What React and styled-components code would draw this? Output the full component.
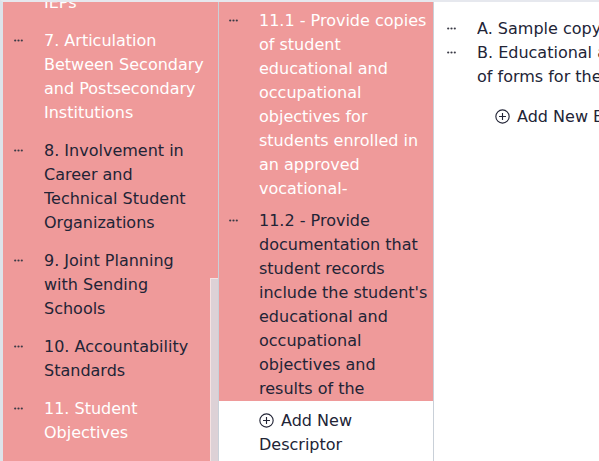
import React from "react";
import styled, { createGlobalStyle } from "styled-components";

const Global = createGlobalStyle`
  html, body { margin: 0; padding: 0; background: #ffffff; overflow: hidden; }
  body { font-family: "DejaVu Sans", "Noto Sans", sans-serif; }
`;

const PINK = "#ef9a9a";
const INK = "#222436";

const Page = styled.div`
  display: flex;
  width: 599px;
  height: 461px;
  box-sizing: border-box;
  border-top: 2px solid #e6e8ee;
  border-left: 3px solid #dde3ea;
  overflow: hidden;
  font-size: 16px;
  line-height: 24px;
  color: ${INK};
`;

const CriteriaColumn = styled.section`
  flex: 0 0 215px;
  display: flex;
  background: ${PINK};
  overflow: hidden;
`;

const CriteriaList = styled.div`
  flex: 1;
  display: flex;
  flex-direction: column;
  justify-content: flex-end;
  overflow: hidden;
  padding-bottom: 9px;
`;

const ScrollTrack = styled.div`
  flex: 0 0 8px;
  display: flex;
  flex-direction: column;
`;

const ScrollThumb = styled.div`
  margin-top: auto;
  height: 183px;
  box-sizing: border-box;
  background: #ddd1d6;
  border-left: 1px solid #f6e2e2;
  border-top: 1px solid #f6e2e2;
`;

const Item = styled.div`
  display: grid;
  grid-template-columns: 30px 1fr;
  flex-shrink: 0;
  padding: ${(p) => p.$pad};
  color: ${(p) => (p.$active ? "#ffffff" : INK)};
`;

const Dots = styled.span`
  display: block;
  padding-top: 8px;
  line-height: 0;
`;

const ItemText = styled.div`
  max-height: ${(p) => p.$max || "none"};
  overflow: hidden;
`;

const DescriptorColumn = styled.section`
  flex: 0 0 214px;
  display: flex;
  flex-direction: column;
  border-left: 1px solid #c9d0d8;
  background: #ffffff;
`;

const DescriptorList = styled.div`
  display: flex;
  flex-direction: column;
  gap: 8px;
  padding: 7px 0 0;
  background: ${PINK};
`;

const AddButton = styled.div`
  padding: ${(p) => p.$pad};
  color: ${INK};
`;

const PlusIcon = styled.svg`
  display: inline-block;
  vertical-align: -2px;
  margin-right: 7px;
`;

const EvidenceColumn = styled.section`
  flex: 0 0 290px;
  border-left: 1px solid #c9d0d8;
  background: #ffffff;
  padding-top: 15px;
  box-sizing: border-box;
`;

const EllipsisIcon = () => (
  <svg width="9" height="3" viewBox="0 0 9 3">
    <circle cx="1.2" cy="1.5" r="1.1" fill="#3a3a46" />
    <circle cx="4.5" cy="1.5" r="1.1" fill="#3a3a46" />
    <circle cx="7.8" cy="1.5" r="1.1" fill="#3a3a46" />
  </svg>
);

const CirclePlus = () => (
  <PlusIcon width="15" height="15" viewBox="0 0 16 16">
    <circle cx="8" cy="8" r="7.1" fill="none" stroke={INK} strokeWidth="1.2" />
    <path d="M8 4.3v7.4M4.3 8h7.4" stroke={INK} strokeWidth="1.2" fill="none" />
  </PlusIcon>
);

const criteria = [
  { text: <>6. Coordination of Transition Services and<br />IEPs</>, active: true },
  { text: "7. Articulation Between Secondary and Postsecondary Institutions", active: true },
  { text: "8. Involvement in Career and Technical Student Organizations" },
  { text: "9. Joint Planning with Sending Schools" },
  { text: "10. Accountability Standards" },
  { text: "11. Student Objectives", active: true },
];

const descriptors = [
  {
    text: (
      <>
        11.1 - Provide copies of student educational and occupational objectives for students enrolled in an approved vocational-
        <br />
        technical education program
      </>
    ),
    active: true,
  },
  {
    text:
      "11.2 - Provide documentation that student records include the student's educational and occupational objectives and results of the student's evaluation",
  },
];

const evidence = [
  "A. Sample copy of plan",
  "B. Educational assessments of forms for the students",
];

export default function App() {
  return (
    <>
      <Global />
      <Page>
        <CriteriaColumn>
          <CriteriaList>
            {criteria.map((c, i) => (
              <Item key={i} $pad="7px 2px 7px 11px" $active={c.active}>
                <Dots><EllipsisIcon /></Dots>
                <ItemText>{c.text}</ItemText>
              </Item>
            ))}
          </CriteriaList>
          <ScrollTrack>
            <ScrollThumb />
          </ScrollTrack>
        </CriteriaColumn>

        <DescriptorColumn>
          <DescriptorList>
            {descriptors.map((d, i) => (
              <Item key={i} $pad="0 2px 0 10px" $active={d.active}>
                <Dots><EllipsisIcon /></Dots>
                <ItemText $max="192px">{d.text}</ItemText>
              </Item>
            ))}
          </DescriptorList>
          <AddButton $pad="8px 2px 0 40px">
            <CirclePlus />
            Add New Descriptor
          </AddButton>
        </DescriptorColumn>

        <EvidenceColumn>
          {evidence.map((e, i) => (
            <Item key={i} $pad="0 7px 0 13px">
              <Dots><EllipsisIcon /></Dots>
              <ItemText>{e}</ItemText>
            </Item>
          ))}
          <AddButton $pad="16px 0 0 61px">
            <CirclePlus />
            Add New Evidence
          </AddButton>
        </EvidenceColumn>
      </Page>
    </>
  );
}
